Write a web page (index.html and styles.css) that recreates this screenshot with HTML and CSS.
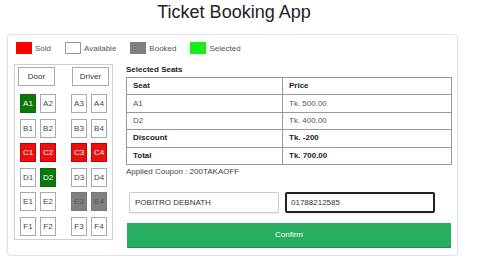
FILE: index.html
```html
<!DOCTYPE html>
<html lang="en">
<head>
  <meta charset="UTF-8">
  <meta name="viewport" content="width=device-width, initial-scale=1.0">
  <title>Ticket Booking App</title>
  <link rel="stylesheet" href="styles.css">
</head>
<body>
  <div class="app">
    <h1 class="title">Ticket Booking App</h1>

    <div class="card">
      <div class="legend">
        <div class="legend-item"><span class="swatch sold"></span>Sold</div>
        <div class="legend-item"><span class="swatch available"></span>Available</div>
        <div class="legend-item"><span class="swatch booked"></span>Booked</div>
        <div class="legend-item"><span class="swatch selected"></span>Selected</div>
      </div>

      <div class="main">
        <div class="bus">
          <div class="bus-front">
            <button class="front-btn">Door</button>
            <button class="front-btn">Driver</button>
          </div>
          <div class="seats">
            <div class="seat-row">
              <div class="pair"><span class="seat selected">A1</span><span class="seat">A2</span></div>
              <div class="pair"><span class="seat">A3</span><span class="seat">A4</span></div>
            </div>
            <div class="seat-row">
              <div class="pair"><span class="seat">B1</span><span class="seat">B2</span></div>
              <div class="pair"><span class="seat">B3</span><span class="seat">B4</span></div>
            </div>
            <div class="seat-row">
              <div class="pair"><span class="seat sold">C1</span><span class="seat sold">C2</span></div>
              <div class="pair"><span class="seat sold">C3</span><span class="seat sold">C4</span></div>
            </div>
            <div class="seat-row">
              <div class="pair"><span class="seat">D1</span><span class="seat selected">D2</span></div>
              <div class="pair"><span class="seat">D3</span><span class="seat">D4</span></div>
            </div>
            <div class="seat-row">
              <div class="pair"><span class="seat">E1</span><span class="seat">E2</span></div>
              <div class="pair"><span class="seat booked">E3</span><span class="seat booked">E4</span></div>
            </div>
            <div class="seat-row">
              <div class="pair"><span class="seat">F1</span><span class="seat">F2</span></div>
              <div class="pair"><span class="seat">F3</span><span class="seat">F4</span></div>
            </div>
          </div>
        </div>

        <div class="summary">
          <div class="summary-title">Selected Seats</div>
          <table class="seat-table">
            <tr class="bold"><td class="col-seat">Seat</td><td>Price</td></tr>
            <tr><td class="col-seat">A1</td><td>Tk. 500.00</td></tr>
            <tr><td class="col-seat">D2</td><td>Tk. 400.00</td></tr>
            <tr class="bold"><td class="col-seat">Discount</td><td>Tk. -200</td></tr>
            <tr class="bold"><td class="col-seat">Total</td><td>Tk. 700.00</td></tr>
          </table>
          <div class="coupon">Applied Coupon : 200TAKAOFF</div>

          <div class="form-row">
            <input type="text" class="field" value="POBITRO DEBNATH">
            <input type="text" class="field active" value="01788212585">
          </div>
          <button class="confirm">Confirm</button>
        </div>
      </div>
    </div>
  </div>
</body>
</html>
```

FILE: styles.css
```css
body {
  margin: 0;
  background-color: #fff;
  font-family: 'Liberation Sans', Arial, sans-serif;
  color: #333;
}

.app {
  width: 451px;
  margin-left: 7px;
}

.title {
  margin: 2px 0 11px 3px;
  font-size: 18px;
  font-weight: normal;
  line-height: 21px;
  text-align: center;
  color: #222;
}

.card {
  border: 1px solid #e2e2e2;
  border-radius: 4px;
  box-shadow: 0 1px 3px rgba(0, 0, 0, 0.08);
  padding: 7px 5px 7px 6px;
}

/* legend */
.legend {
  display: flex;
  gap: 14px;
  margin-left: 2px;
  height: 12px;
}

.legend-item {
  display: flex;
  align-items: center;
  gap: 3px;
  font-size: 8px;
  color: #555;
}

.swatch {
  width: 16px;
  height: 12px;
  box-sizing: border-box;
}

.swatch.sold {
  background-color: #ff0000;
}

.swatch.available {
  border: 1px solid #999;
  background-color: #fff;
}

.swatch.booked {
  background-color: #808080;
}

.swatch.selected {
  background-color: #16ee16;
}

.main {
  display: flex;
  align-items: flex-start;
  gap: 13px;
  margin-top: 10px;
}

/* seat map */
.bus {
  width: 99px;
  box-sizing: border-box;
  border: 1px solid #d0d0d0;
  padding: 2px 3px 3px 3px;
}

.bus-front {
  display: flex;
  justify-content: space-between;
}

.front-btn {
  width: 37px;
  height: 19px;
  padding: 0;
  border: 1px solid #aaa;
  background-color: #fff;
  font-family: inherit;
  font-size: 8px;
  color: #333;
}

.seats {
  width: 87px;
  margin: 8px auto 0;
  display: flex;
  flex-direction: column;
  gap: 5.6px;
}

.seat-row {
  display: flex;
  justify-content: space-between;
}

.pair {
  display: flex;
  gap: 4px;
}

.seat {
  width: 16px;
  height: 19px;
  box-sizing: border-box;
  border: 1px solid #aaa;
  display: flex;
  align-items: center;
  justify-content: center;
  font-size: 8px;
  color: #444;
  background-color: #fff;
}

.seat.selected {
  background-color: #0b7a0b;
  border-color: #0b6a0b;
  color: #fff;
}

.seat.sold {
  background-color: #ee0e0e;
  border-color: #c40000;
  color: #fff;
}

.seat.booked {
  background-color: #808080;
  border-color: #777;
  color: #555;
}

/* summary */
.summary {
  width: 326px;
}

.summary-title {
  margin-top: 1px;
  font-size: 8px;
  font-weight: bold;
  line-height: 10px;
  color: #222;
}

.seat-table {
  width: 100%;
  margin-top: 2px;
  border-collapse: collapse;
  border: 1px solid #999;
  font-size: 8px;
  line-height: 10px;
  color: #555;
}

.seat-table td {
  border: 1px solid #999;
  padding: 3.2px 6px;
}

.seat-table .col-seat {
  width: 143px;
}

.seat-table .bold td {
  font-weight: bold;
  color: #222;
}

.coupon {
  margin-top: 2px;
  font-size: 8px;
  line-height: 10px;
  color: #444;
}

.form-row {
  display: flex;
  margin-top: 15px;
}

.field {
  width: 150px;
  height: 21px;
  box-sizing: border-box;
  margin: 0 3px;
  padding: 0 5px;
  border: 1px solid #ccc;
  border-radius: 2px;
  box-shadow: 0 1px 1px rgba(0, 0, 0, 0.08);
  font-family: inherit;
  font-size: 8px;
  color: #333;
  outline: none;
}

.field.active {
  border: 2px solid #222;
  padding: 0 4px;
}

.confirm {
  display: block;
  width: 324px;
  height: 25px;
  margin: 10px 1px 0;
  border: none;
  border-bottom: 1px solid #1e8a4c;
  background-color: #27ae60;
  font-family: inherit;
  font-size: 8px;
  color: #fff;
}
```
